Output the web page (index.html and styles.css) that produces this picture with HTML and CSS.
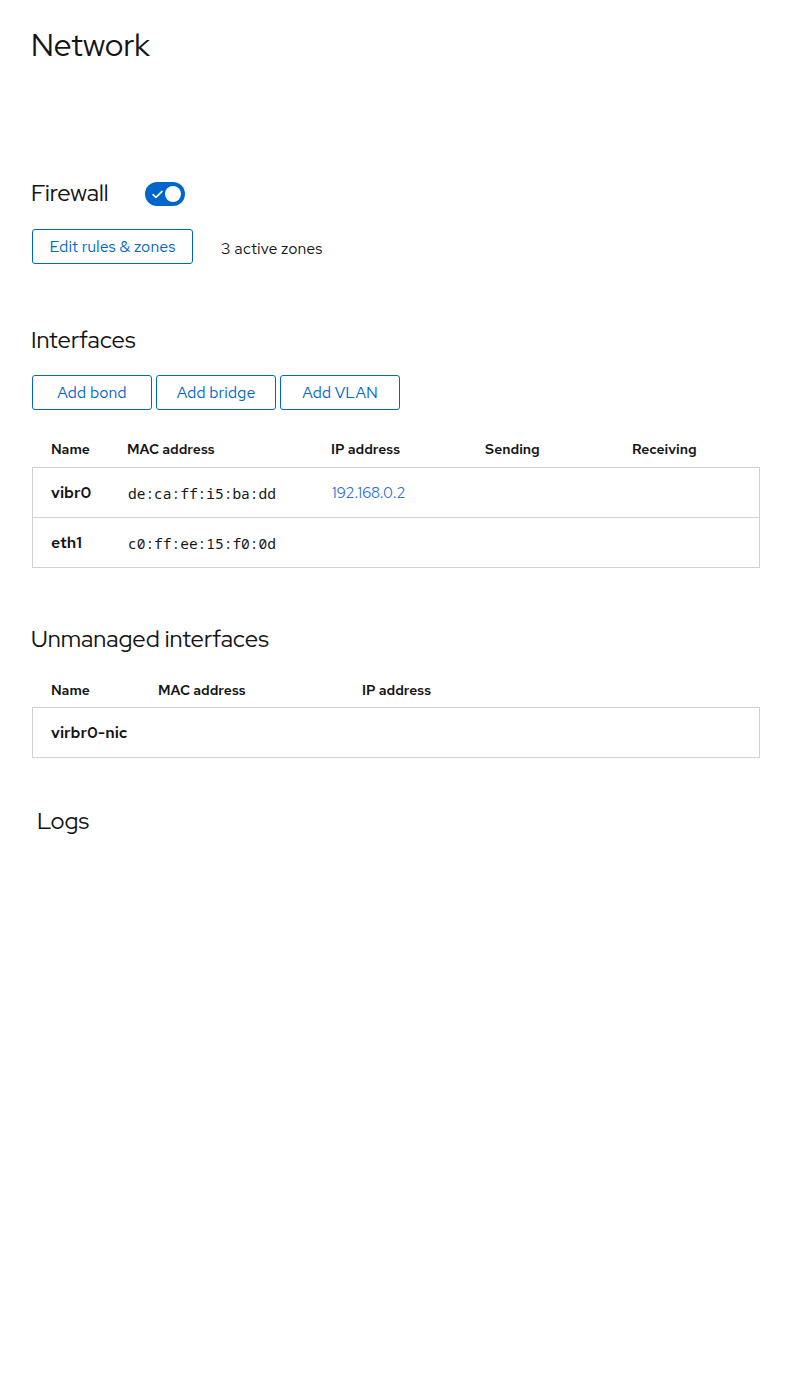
FILE: index.html
```html
<!DOCTYPE html>
<html lang="en">
<head>
<meta charset="utf-8">
<title>Network</title>
<link rel="stylesheet" href="styles.css">
</head>
<body>
<main class="page">
  <h1 class="page-title">Network</h1>

  <section class="firewall">
    <div class="firewall-head">
      <h2 class="section-title">Firewall</h2>
      <span class="switch" role="switch" aria-checked="true">
        <svg class="switch-check" viewBox="0 0 12 10" width="11" height="9"><path d="M1 5.2 L4.3 8.2 L11 1.5" fill="none" stroke="#fff" stroke-width="1.8" stroke-linecap="round" stroke-linejoin="round"/></svg>
        <span class="switch-knob"></span>
      </span>
    </div>
    <div class="firewall-actions">
      <button class="btn btn-wide">Edit rules &amp; zones</button>
      <span class="zones">3 active zones</span>
    </div>
  </section>

  <section class="interfaces">
    <h2 class="section-title">Interfaces</h2>
    <div class="btn-group">
      <button class="btn">Add bond</button>
      <button class="btn">Add bridge</button>
      <button class="btn">Add VLAN</button>
    </div>
    <div class="table table-managed">
      <div class="thead row-grid">
        <span>Name</span><span>MAC address</span><span>IP address</span><span>Sending</span><span>Receiving</span>
      </div>
      <div class="tbody">
        <div class="trow row-grid">
          <span class="name">vibr0</span><span class="mac">de:ca:ff:i5:ba:dd</span><span class="ip">192.168.0.2</span><span></span><span></span>
        </div>
        <div class="trow row-grid">
          <span class="name">eth1</span><span class="mac">c0:ff:ee:15:f0:0d</span><span></span><span></span><span></span>
        </div>
      </div>
    </div>
  </section>

  <section class="unmanaged">
    <h2 class="section-title">Unmanaged interfaces</h2>
    <div class="table table-unmanaged">
      <div class="thead row-grid">
        <span>Name</span><span>MAC address</span><span>IP address</span>
      </div>
      <div class="tbody">
        <div class="trow row-grid">
          <span class="name">virbr0-nic</span><span></span><span></span>
        </div>
      </div>
    </div>
  </section>

  <section class="logs">
    <h2 class="section-title">Logs</h2>
  </section>
</main>
</body>
</html>
```

FILE: styles.css
```css
* { box-sizing: border-box; }
html, body { margin: 0; padding: 0; background: #fff; }
body {
  font-family: "Red Hat Text", Lato, "Open Sans", sans-serif;
  color: #151515;
}
.page {
  padding: 27px 40px 40px 31px;
}
h1, h2 { margin: 0; font-weight: 400; font-family: "Red Hat Display", "Red Hat Text", sans-serif; }
.page-title {
  font-size: 31.5px;
  line-height: 36px;
}
.section-title {
  font-size: 23.7px;
  line-height: 30px;
}

.firewall { margin-top: 115px; }
.firewall-head {
  display: flex;
  align-items: center;
  gap: 37px;
}
.switch {
  position: relative;
  display: inline-flex;
  align-items: center;
  width: 40px;
  height: 24px;
  border-radius: 12px;
  background: #0066cc;
  padding-left: 7px;
  margin-top: 2px;
}
.switch-knob {
  position: absolute;
  right: 4px;
  top: 4px;
  width: 16px;
  height: 16px;
  border-radius: 50%;
  background: #fff;
}
.firewall-actions {
  display: flex;
  align-items: center;
  gap: 28px;
  margin-top: 21px;
}
.zones { font-size: 16px; line-height: 20px; padding-top: 4px; }

.btn {
  font-family: inherit;
  font-size: 16px;
  line-height: 20px;
  color: #0066cc;
  background: #fff;
  border: 1px solid #0066cc;
  border-radius: 3px;
  height: 35px;
  width: 120px;
  padding: 0 8px;
  margin: 0;
}
.btn-wide { width: 161px; margin-left: 1px; }

.interfaces { margin-top: 61px; }
.btn-group {
  display: flex;
  gap: 4px;
  margin-top: 20px;
  padding-left: 1px;
}

.table { margin-left: 1px; }
.row-grid {
  display: grid;
  padding-left: 19px;
}
.table-managed .row-grid { grid-template-columns: 76px 204px 154px 147px 1fr; }
.table-unmanaged .row-grid { grid-template-columns: 107px 204px 1fr; }
.thead {
  font-size: 14px;
  line-height: 20px;
  color: #151515;
  padding-top: 10px;
  padding-bottom: 8px;
}
.table-managed .thead { margin-top: 19px; }
.table-unmanaged .thead { margin-top: 16px; }
.table-unmanaged .thead { padding-bottom: 7px; }
.thead span { font-weight: 600; }
.tbody {
  border: 1px solid #d2d2d2;
  width: 728px;
}
.trow {
  height: 49px;
  align-items: center;
  font-size: 16px;
}
.trow + .trow { border-top: 1px solid #d2d2d2; height: 50px; }
.name { font-weight: 600; margin-left: -1px; }
.mac {
  font-family: "Noto Sans Mono", "Liberation Mono", "DejaVu Sans Mono", monospace;
  font-size: 14.5px;
  color: #151515;
}
.ip { color: #2b6fd4; font-size: 15px; }

.unmanaged { margin-top: 56px; }
.logs { margin-top: 48px; padding-left: 6px; }
```
